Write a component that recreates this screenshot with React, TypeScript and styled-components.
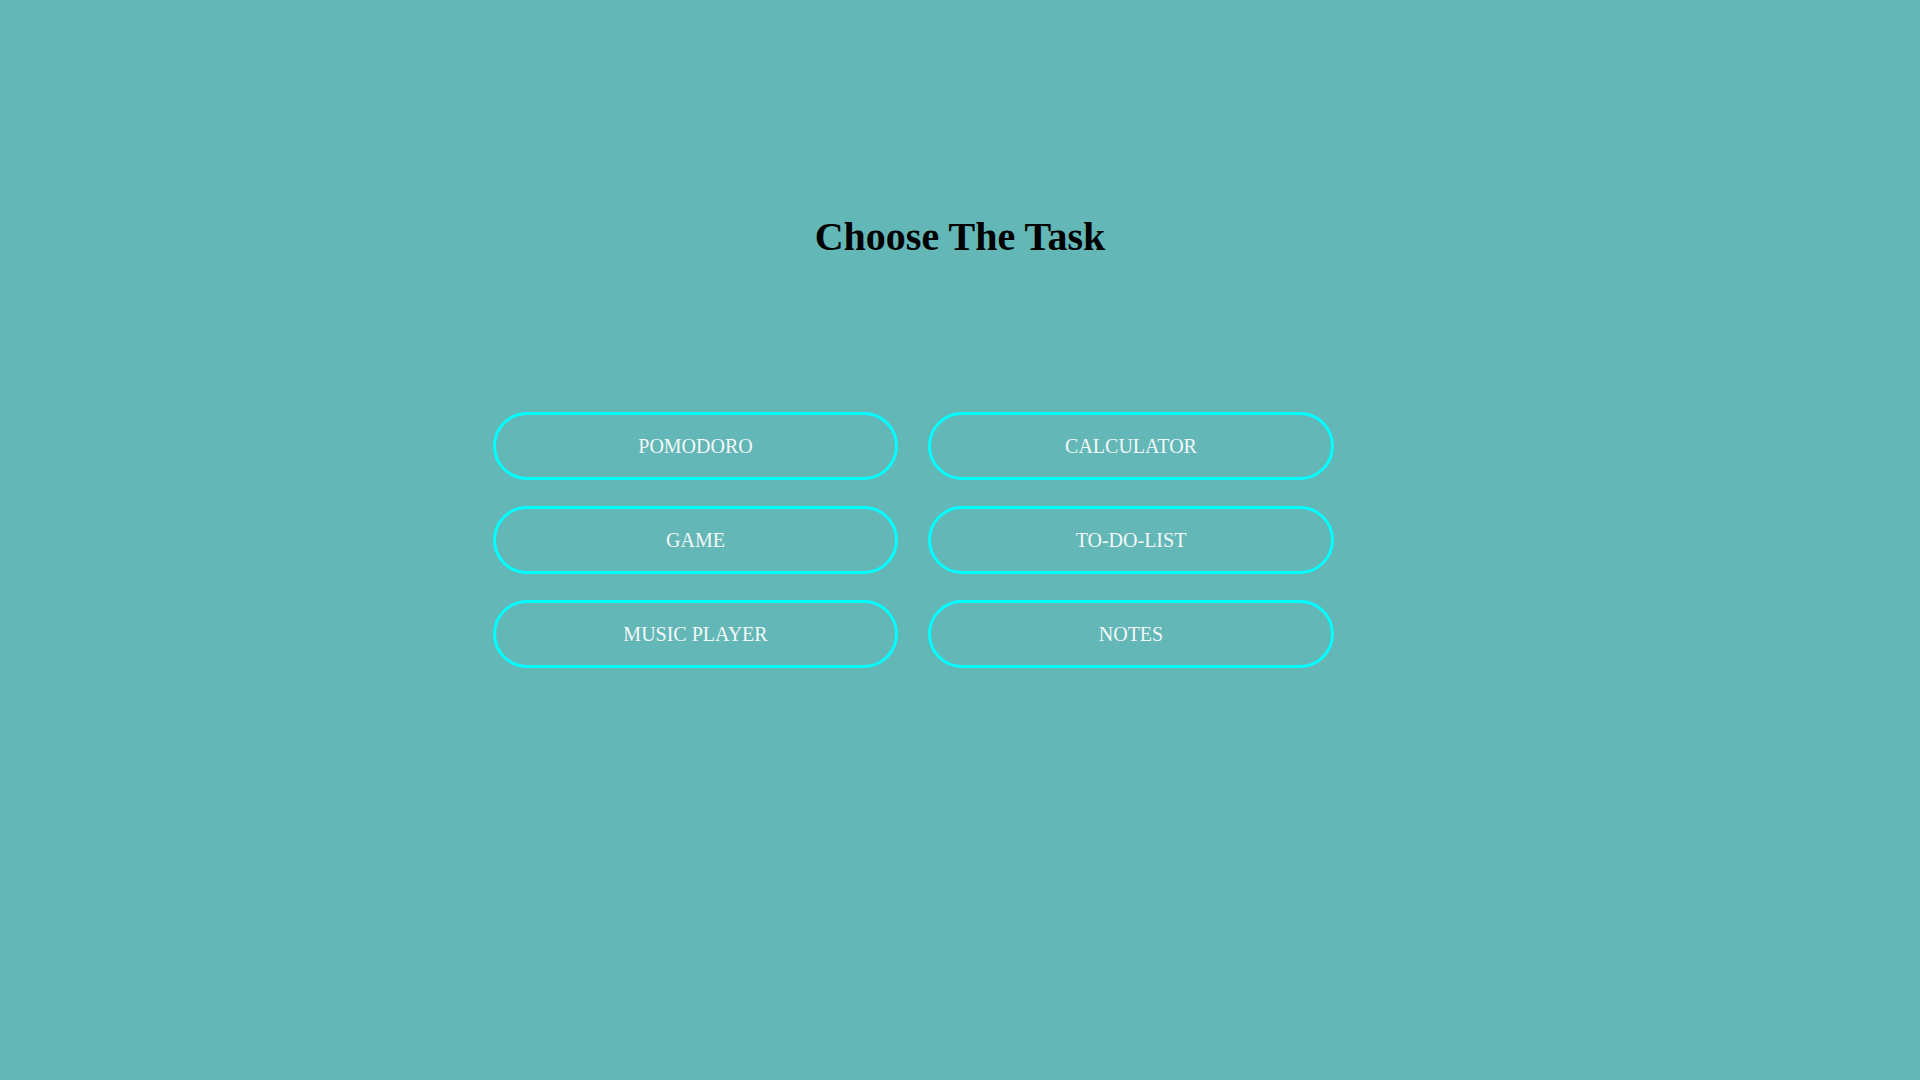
import React from "react";
import styled, { createGlobalStyle } from "styled-components";

const GlobalStyle = createGlobalStyle`
  html, body {
    margin: 0;
    padding: 0;
    background: #63b7b7;
    font-family: "Liberation Serif", "Times New Roman", serif;
  }
`;

const Page = styled.div`
  min-height: 1080px;
  background: #63b7b7;
  display: flex;
  flex-direction: column;
  padding-top: 214px;
  box-sizing: border-box;
`;

const Title = styled.h1`
  margin: 0;
  text-align: center;
  font-size: 40px;
  line-height: 46px;
  font-weight: 700;
  color: #000;
`;

const Grid = styled.div`
  display: grid;
  grid-template-columns: 405px 406px;
  column-gap: 30px;
  row-gap: 26px;
  margin-top: 152px;
  margin-left: calc(50% - 467px);
`;

const TaskButton = styled.button`
  height: 68px;
  box-sizing: border-box;
  border: 3px solid #00ffff;
  border-radius: 34px;
  background: transparent;
  color: #f4f8f8;
  font-family: "Liberation Serif", "Times New Roman", serif;
  font-size: 20px;
  cursor: pointer;
  padding: 0;
`;

const tasks = ["POMODORO", "CALCULATOR", "GAME", "TO-DO-LIST", "MUSIC PLAYER", "NOTES"];

export default function App() {
  return (
    <>
      <GlobalStyle />
      <Page>
        <Title>Choose The Task</Title>
        <Grid>
          {tasks.map((t) => (
            <TaskButton key={t}>{t}</TaskButton>
          ))}
        </Grid>
      </Page>
    </>
  );
}
